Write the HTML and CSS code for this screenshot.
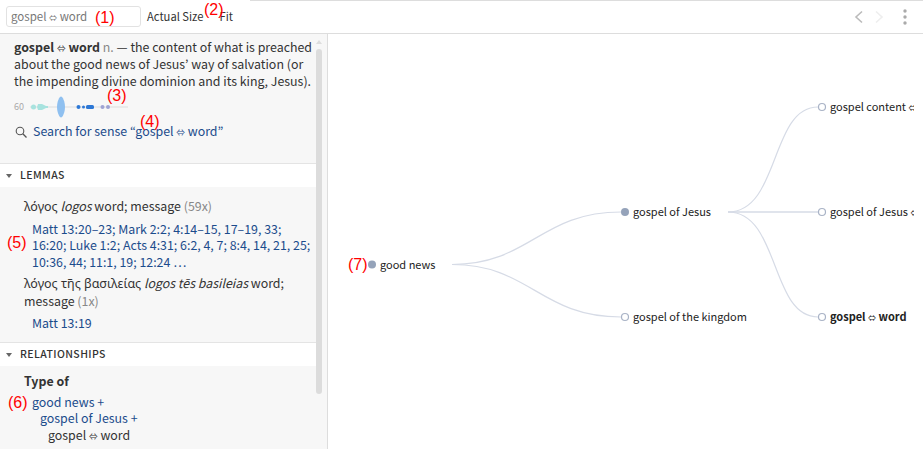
FILE: index.html
```html
<!DOCTYPE html>
<html lang="en">
<head>
<meta charset="utf-8">
<title>gospel ⇔ word</title>
<link rel="stylesheet" href="styles.css">
</head>
<body>
<div class="app">
  <header class="toolbar">
    <div class="search-box">gospel <span class="arrow">⇔</span> word</div>
    <span class="tool-btn">Actual Size</span>
    <span class="tool-btn fit">Fit</span>
    <div class="tool-right">
      <svg class="nav-icon" width="10" height="14" viewBox="0 0 10 14"><path d="M8 1.500 2 7l6 5.500" fill="none" stroke="#bbb" stroke-width="1.600"/></svg>
      <svg class="nav-icon" width="10" height="14" viewBox="0 0 10 14"><path d="M2 1.500 8 7l-6 5.500" fill="none" stroke="#eee" stroke-width="1.600"/></svg>
      <svg class="more-icon" width="4" height="16" viewBox="0 0 4 16"><circle cx="2" cy="2" r="1.700" fill="#aaa"/><circle cx="2" cy="8" r="1.700" fill="#aaa"/><circle cx="2" cy="14" r="1.700" fill="#aaa"/></svg>
    </div>
  </header>
  <main class="body">
    <aside class="sidebar">
      <div class="panel">
        <section class="summary">
          <p class="definition"><b>gospel <span class="arrow">⇔</span> word</b> <span class="muted">n.</span> — the content of what is preached about the good news of Jesus’ way of salvation (or the impending divine dominion and its king, Jesus).</p>
          <div class="spark">
            <span class="spark-count">60</span>
            <svg width="98" height="22" viewBox="0 0 98 22">
              <line x1="0" y1="11" x2="98" y2="11" stroke="#ddd"/>
              <circle cx="3.500" cy="11" r="2.500" fill="#a8e3df"/>
              <path d="M7 11 8 8h4l4 2h2v2h-2l-4 2H8z" fill="#a8e3df"/>
              <path d="M31 .5c1.500 0 4 5 4 10.500s-2.500 10.500-4 10.500-4-5-4-10.500S29.500.5 31 .5z" fill="#8fc0f0"/>
              <circle cx="48.500" cy="11" r="2" fill="#2d78d6"/>
              <circle cx="53.500" cy="11" r="1.500" fill="#2d78d6"/>
              <rect x="56" y="9" width="8" height="4" rx="1.500" fill="#2d78d6"/>
              <circle cx="72.500" cy="11" r="2" fill="#9ea3d3"/>
              <circle cx="78" cy="11" r="2" fill="#9ea3d3"/>
            </svg>
          </div>
          <a class="sense-search">
            <svg width="12" height="12" viewBox="0 0 12 12"><circle cx="5" cy="5" r="3.800" fill="none" stroke="#555" stroke-width="1.100"/><path d="M7.800 7.800 11.500 11.500" stroke="#555" stroke-width="1.300"/></svg>
            <span>Search for sense “gospel <span class="arrow">⇔</span> word”</span>
          </a>
        </section>
        <section>
          <h2 class="sec-head"><i class="caret"></i>LEMMAS</h2>
          <div class="sec-body lemmas">
            <p class="lemma"><span class="gr">λόγος</span> <em>logos</em> word; message <span class="muted">(59x)</span></p>
            <p class="refs">Matt 13:20–23; Mark 2:2; 4:14–15, 17–19, 33; 16:20; Luke 1:2; Acts 4:31; 6:2, 4, 7; 8:4, 14, 21, 25; 10:36, 44; 11:1, 19; 12:24 …</p>
            <p class="lemma second"><span class="gr">λόγος τῆς βασιλείας</span> <em>logos tēs basileias</em> word; message <span class="muted">(1x)</span></p>
            <p class="refs last">Matt 13:19</p>
          </div>
        </section>
        <section class="relationships">
          <h2 class="sec-head"><i class="caret"></i>RELATIONSHIPS</h2>
          <div class="sec-body rel">
            <h3 class="rel-title">Type of</h3>
            <p class="rel-line lvl0">good news +</p>
            <p class="rel-line lvl1">gospel of Jesus +</p>
            <p class="rel-line lvl2">gospel <span class="arrow">⇔</span> word</p>
          </div>
        </section>
      </div>
      <div class="scrollbar"><i class="scroll-up"></i><i class="scroll-thumb"></i></div>
    </aside>
    <section class="graph">
      <svg class="graph-svg" width="595" height="415" viewBox="328 34 595 415">
        <defs><clipPath id="labels"><rect x="328" y="34" width="586" height="415"/></clipPath></defs>
        <g fill="none" stroke="#d6dbe6" stroke-width="1.200">
          <path d="M452 264.500C530 264.500 540 212 621 212"/>
          <path d="M452 264.500C530 264.500 540 317 621 317"/>
          <path d="M728 212C780 212 770 107 818 107"/>
          <path d="M728 212H818" stroke-width="1.600"/>
          <path d="M728 212C780 212 770 317 818 317"/>
        </g>
        <g class="node-filled">
          <circle cx="372" cy="264.500" r="4"/>
          <circle cx="625" cy="212" r="4"/>
        </g>
        <g class="node-open">
          <circle cx="625" cy="317" r="3.500"/>
          <circle cx="822" cy="107" r="3.500"/>
          <circle cx="822" cy="212" r="3.500"/>
          <circle cx="822" cy="317" r="3.500"/>
        </g>
        <g class="node-label" clip-path="url(#labels)">
          <text x="380" y="269">good news</text>
          <text x="633" y="216">gospel of Jesus</text>
          <text x="633" y="321">gospel of the kingdom</text>
          <text x="830" y="111">gospel content <tspan class="arrow">⇔</tspan> message</text>
          <text x="830" y="216">gospel of Jesus <tspan class="arrow">⇔</tspan> message</text>
          <text x="830" y="321" class="current">gospel <tspan class="arrow">⇔</tspan> word</text>
        </g>
      </svg>
    </section>
  </main>
  <span class="mark m1">(1)</span>
  <span class="mark m2">(2)</span>
  <span class="mark m3">(3)</span>
  <span class="mark m4">(4)</span>
  <span class="mark m5">(5)</span>
  <span class="mark m6">(6)</span>
  <span class="mark m7">(7)</span>
</div>
</body>
</html>
```
FILE: styles.css
```css
* { box-sizing: border-box; }
html, body { margin: 0; padding: 0; }
body {
  font-family: "Noto Sans CJK KR", "Noto Sans", sans-serif;
  font-size: 12.400px;
  line-height: 16.500px;
  color: #333;
  background: #fff;
}
.arrow { font-size: 0.700em; font-weight: 400; vertical-align: 0.5px; }
.gr { font-family: "Noto Sans", sans-serif; font-size: 12.500px; }
.app {
  position: relative;
  width: 923px;
  height: 449px;
  overflow: hidden;
  display: flex;
  flex-direction: column;
}
.app::before {
  content: "";
  position: absolute;
  top: 0;
  left: 250px;
  right: 0;
  height: 1px;
  background: #ddd;
}
.toolbar {
  flex: none;
  height: 34px;
  display: flex;
  align-items: center;
  padding: 0 0 0 6px;
  border-bottom: 1px solid #ddd;
}
.search-box {
  width: 135px;
  height: 21px;
  padding: 1px 0 0 4px;
  border: 1px solid #e2e2e2;
  border-radius: 3px;
  color: #777;
  font-size: 11.500px;
}
.tool-btn { margin-left: 6px; color: #333; font-size: 11.200px; }
.tool-btn.fit { margin-left: 16px; }
.tool-right {
  margin-left: auto;
  display: flex;
  align-items: center;
  gap: 10px;
  padding-right: 16px;
}
.more-icon { margin-left: 9px; }
.body { flex: 1; display: flex; min-height: 0; }
.sidebar {
  flex: none;
  width: 328px;
  display: flex;
  background: #f7f7f7;
  border-right: 1px solid #ddd;
  overflow: hidden;
}
.panel { width: 316px; flex: none; }
.scrollbar {
  flex: 1;
  position: relative;
}
.scroll-up {
  position: absolute;
  top: 6px;
  left: 0;
  width: 0;
  height: 0;
  border: 3px solid transparent;
  border-top: 0;
  border-bottom: 4px solid #ddd;
}
.scroll-thumb {
  position: absolute;
  top: 15px;
  left: 0;
  width: 6px;
  height: 345px;
  border-radius: 3px;
  background: #dcdcdc;
}
p, h2, h3 { margin: 0; }
.muted { color: #888; }
.summary { padding: 5px 0 0 14px; height: 130px; border-bottom: 1px solid #e4e4e4; }
.definition { width: 302px; }
.definition b { color: #333; }
.spark { display: flex; align-items: center; height: 22px; margin-top: 7px; }
.spark-count { width: 16px; font-size: 9px; color: #aaa; }
.sense-search {
  display: flex;
  align-items: center;
  gap: 6px;
  margin: 5px 0 0 1px;
  color: #1c4c8c;
}
.sec-head {
  display: flex;
  align-items: center;
  height: 23px;
  background: #fff;
  font-size: 10.500px;
  font-weight: 500;
  letter-spacing: 0.400px;
  color: #333;
  padding-left: 6px;
}
.caret {
  width: 0;
  height: 0;
  margin-right: 8px;
  border: 3px solid transparent;
  border-bottom: 0;
  border-top: 4px solid #666;
}
.sec-body { padding-left: 24px; padding-right: 4px; }
.lemmas { padding-top: 11px; height: 156px; border-bottom: 1px solid #e4e4e4; }
.refs { margin: 5px 0 0 8px; color: #1c4c8c; }
.refs.last { margin-top: 6px; }
.lemma.second { margin-top: 5px; }
.rel { padding-top: 7px; }
.rel-title { font-size: 12.400px; font-weight: 700; line-height: 16.500px; margin-bottom: 4px; }
.rel-line { color: #1c4c8c; }
.lvl0 { margin-left: 8px; }
.lvl1 { margin-left: 16px; }
.lvl2 { margin-left: 24px; color: #333; }
.graph { flex: 1; min-width: 0; background: #fff; }
.graph-svg { display: block; }
.node-filled circle { fill: #95a3ba; }
.node-open circle { fill: #fff; stroke: #a9b3c6; stroke-width: 1.200; }
.node-label { font-size: 11px; fill: #222; }
.node-label .current { font-weight: 700; }
.node-label .arrow { font-size: 8px; }
.mark {
  position: absolute;
  font-family: "Liberation Sans", sans-serif;
  font-size: 16px;
  line-height: 18px;
  color: #f00;
}
.m1 { left: 95px; top: 9px; }
.m2 { left: 204px; top: 1px; }
.m3 { left: 107px; top: 87px; }
.m4 { left: 140px; top: 113px; }
.m5 { left: 7px; top: 234px; }
.m6 { left: 8px; top: 394px; }
.m7 { left: 348px; top: 256px; }
```
